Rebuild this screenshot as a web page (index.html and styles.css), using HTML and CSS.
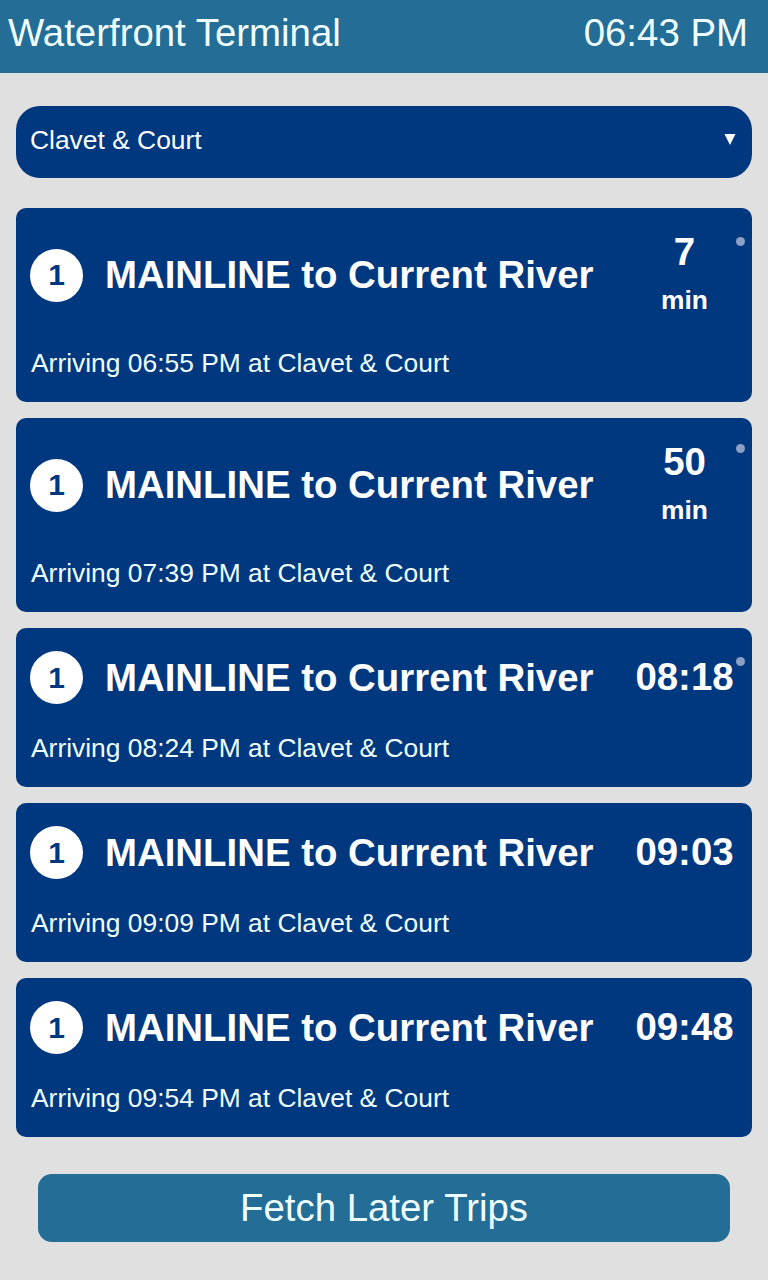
FILE: index.html
```html
<!DOCTYPE html>
<html lang="en">
<head>
<meta charset="utf-8">
<title>Waterfront Terminal</title>
<link rel="stylesheet" href="styles.css">
</head>
<body>
<header class="topbar">
  <span class="station">Waterfront Terminal</span>
  <span class="clock">06:43 PM</span>
</header>
<main class="content">
  <div class="stop-select">
    <span class="stop-name">Clavet &amp; Court</span>
    <svg class="arrow" width="12" height="12" viewBox="0 0 12 12"><polygon points="0.5,1 11.5,1 6,12" fill="#ffffff"/></svg>
  </div>

  <div class="trips">
    <div class="trip">
      <span class="dot"></span>
      <div class="trip-row">
        <span class="route">1</span>
        <span class="title">MAINLINE to Current River</span>
        <div class="when">7<br><span class="unit">min</span></div>
      </div>
      <div class="arrive">Arriving 06:55 PM at Clavet &amp; Court</div>
    </div>

    <div class="trip">
      <span class="dot dot-high"></span>
      <div class="trip-row">
        <span class="route">1</span>
        <span class="title">MAINLINE to Current River</span>
        <div class="when">50<br><span class="unit">min</span></div>
      </div>
      <div class="arrive">Arriving 07:39 PM at Clavet &amp; Court</div>
    </div>

    <div class="trip">
      <span class="dot"></span>
      <div class="trip-row">
        <span class="route">1</span>
        <span class="title">MAINLINE to Current River</span>
        <div class="when">08:18</div>
      </div>
      <div class="arrive">Arriving 08:24 PM at Clavet &amp; Court</div>
    </div>

    <div class="trip">
      <div class="trip-row">
        <span class="route">1</span>
        <span class="title">MAINLINE to Current River</span>
        <div class="when">09:03</div>
      </div>
      <div class="arrive">Arriving 09:09 PM at Clavet &amp; Court</div>
    </div>

    <div class="trip">
      <div class="trip-row">
        <span class="route">1</span>
        <span class="title">MAINLINE to Current River</span>
        <div class="when">09:48</div>
      </div>
      <div class="arrive">Arriving 09:54 PM at Clavet &amp; Court</div>
    </div>
  </div>

  <button class="fetch" type="button">Fetch Later Trips</button>
</main>
</body>
</html>
```

FILE: styles.css
```css
* {
  box-sizing: border-box;
}

html, body {
  margin: 0;
  padding: 0;
}

body {
  background: #e0e0e0;
  font-family: "Liberation Sans", Arial, sans-serif;
  color: #f0ffff;
  width: 768px;
  min-height: 1280px;
}

.topbar {
  height: 73px;
  background: #236d96;
  display: flex;
  justify-content: space-between;
  align-items: flex-start;
  padding: 11px 20px 0 8px;
  font-size: 38.4px;
  line-height: normal;
  color: #f0ffff;
}

.content {
  padding: 33px 16px 38px 16px;
  display: flex;
  flex-direction: column;
}

.stop-select {
  height: 72px;
  background: #00387f;
  border-radius: 24px;
  display: flex;
  align-items: center;
  justify-content: space-between;
  padding: 0 16px 0 14px;
  font-size: 26.4px;
  color: #ffffff;
}

.stop-name {
  position: relative;
  top: -2px;
}

.arrow {
  display: block;
  position: relative;
  top: -3px;
}

.trips {
  margin-top: 30px;
  display: flex;
  flex-direction: column;
  gap: 16px;
}

.trip {
  position: relative;
  background: #00387f;
  border-radius: 10px;
  padding: 22px 18px 23px 15px;
}

.dot {
  position: absolute;
  top: 29px;
  right: 7px;
  width: 9px;
  height: 9px;
  border-radius: 50%;
  background: #8c9fc4;
}

.dot-high {
  top: 26px;
}

.trip-row {
  display: flex;
  align-items: center;
}

.route {
  flex: none;
  width: 53px;
  height: 53px;
  border-radius: 50%;
  background: #ffffff;
  color: #00387f;
  font-weight: bold;
  font-size: 30px;
  display: flex;
  align-items: center;
  justify-content: center;
  margin-left: -1px;
  position: relative;
  top: 1px;
}

.title {
  flex: 1;
  margin-left: 22px;
  font-size: 38.4px;
  font-weight: bold;
  color: #ffffff;
  white-space: nowrap;
  position: relative;
  top: 1px;
}

.when {
  flex: none;
  width: 99px;
  text-align: center;
  font-size: 38.4px;
  font-weight: bold;
  color: #ffffff;
}

.unit {
  font-size: 26.4px;
}

.arrive {
  margin-top: 30px;
  font-size: 26.4px;
  color: #f0ffff;
}

.fetch {
  margin: 37px 22px 0 22px;
  height: 68px;
  border: none;
  border-radius: 14px;
  background: #236d96;
  color: #f0ffff;
  font-family: "Liberation Sans", Arial, sans-serif;
  font-size: 38.4px;
  padding: 0;
}
```
